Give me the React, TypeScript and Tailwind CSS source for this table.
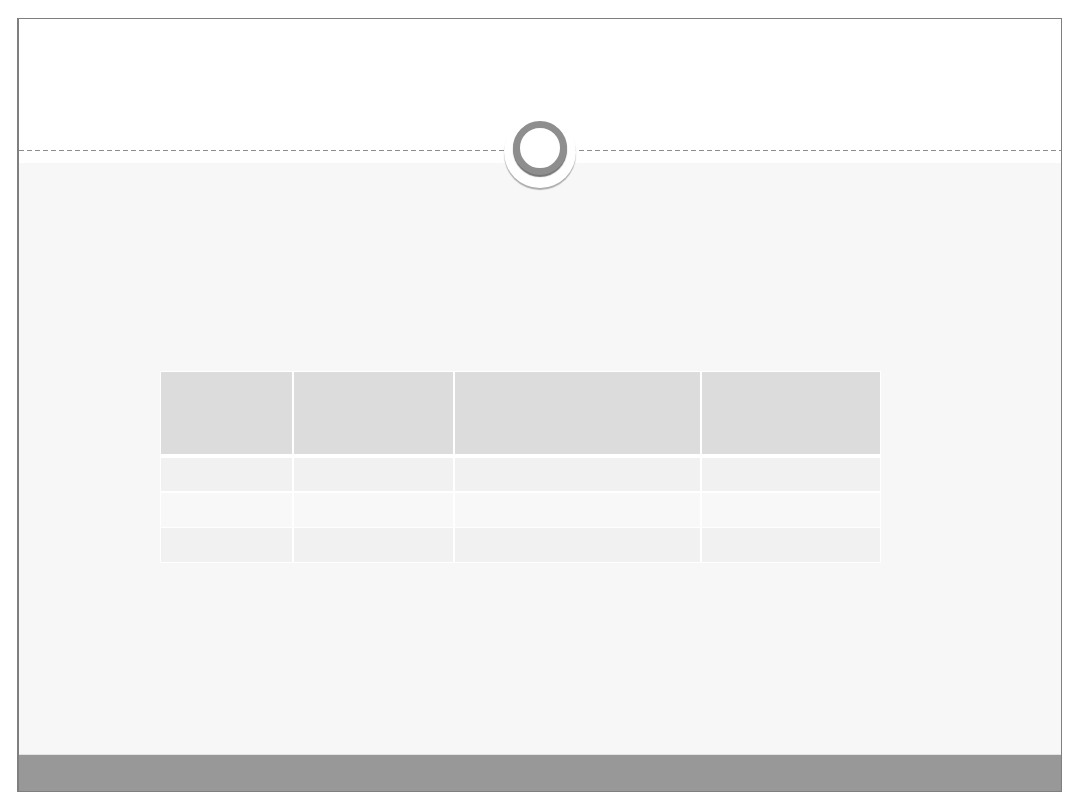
import React from "react";

export default function App() {
  const cols = ["w-[131px]", "w-[159px]", "w-[245px]", "w-[178px]"];
  const Row = ({ h, bg, mt }: { h: string; bg: string; mt: string }) => (
    <div className={`flex gap-x-[2px] ${h} ${mt}`}>
      {cols.map((c, i) => (
        <div key={i} className={`${c} h-full ${bg}`} />
      ))}
    </div>
  );
  return (
    <div className="w-[1080px] h-[810px] bg-white overflow-hidden" style={{ fontFamily: '"Liberation Sans", sans-serif' }}>
      <div className="ml-[17px] mt-[18px] w-[1045px] h-[774px] border-l-2 border-t border-r border-b border-[#7f7f7f] flex flex-col">
        {/* header */}
        <div className="relative h-[144px] bg-white shrink-0">
          <div className="mt-[131px] h-px bg-[repeating-linear-gradient(90deg,#8c8c8c_0_5px,transparent_5px_8px)]" />
          <div className="absolute left-[485px] top-[97px] w-[72px] h-[72px] rounded-full bg-white shadow-[0_2px_1px_rgba(0,0,0,0.3)] flex items-center justify-center z-10">
            <div className="w-[54px] h-[54px] mb-[9px] rounded-full border-[7px] border-[#8e8e8e] bg-white shadow-[0_2px_1px_#747474]" />
          </div>
        </div>
        {/* body */}
        <div className="h-[591px] bg-[#f7f7f7] shrink-0 pt-[208px] pl-[141px]">
          <div className="inline-flex flex-col bg-white p-px">
            <Row h="h-[82px]" bg="bg-[#dcdcdc]" mt="" />
            <Row h="h-[33px]" bg="bg-[#f1f1f1]" mt="mt-[4px]" />
            <Row h="h-[34px]" bg="bg-[#f8f8f8]" mt="mt-[2px]" />
            <Row h="h-[34px]" bg="bg-[#f1f1f1]" mt="mt-px" />
          </div>
        </div>
        <div className="h-px bg-[#e2e2e2] shrink-0" />
        <div className="flex-1 bg-[#989898]" />
      </div>
    </div>
  );
}
